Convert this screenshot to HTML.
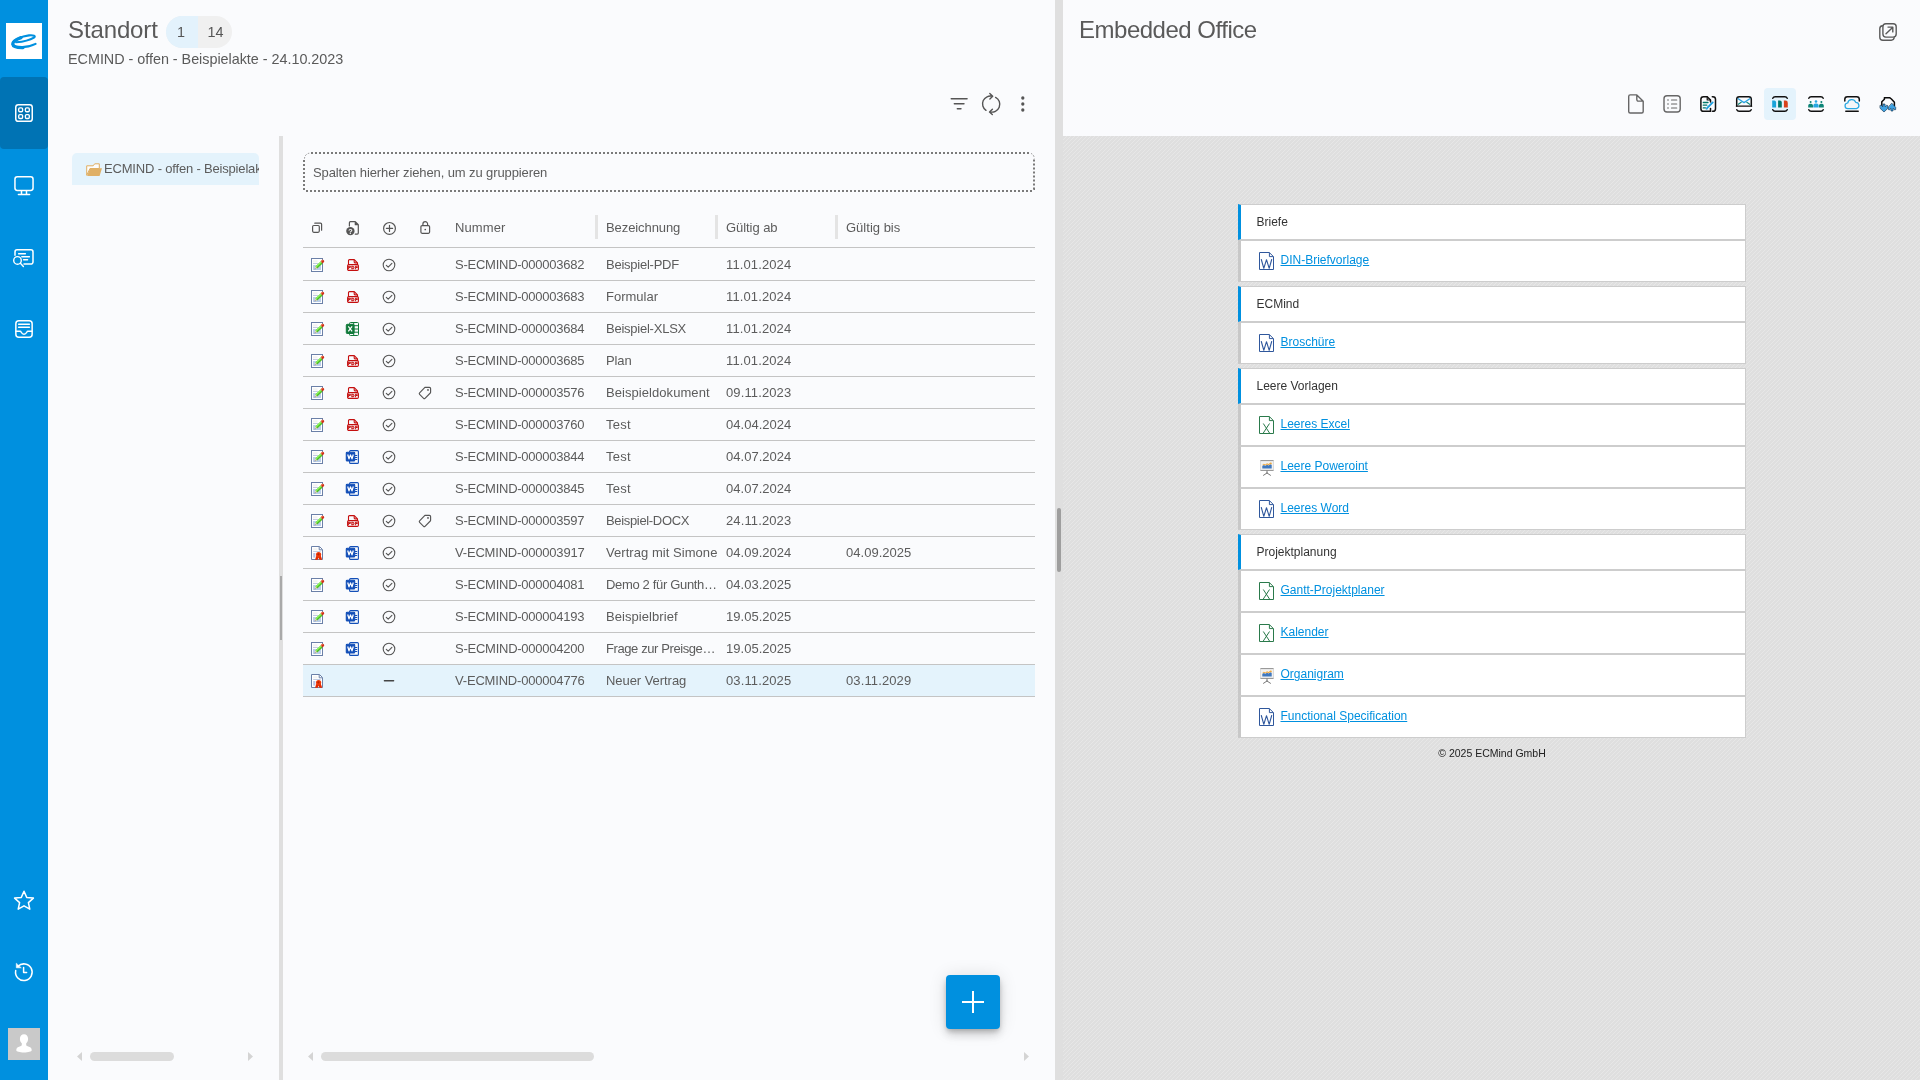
<!DOCTYPE html>
<html lang="de"><head><meta charset="utf-8"><title>Standort</title>
<style>
*{box-sizing:border-box;margin:0;padding:0}
html,body{width:1920px;height:1080px;overflow:hidden;background:#fafbfd}
body{position:relative;font-family:"Liberation Sans",sans-serif;color:#5c5c5c;font-size:13px;-webkit-font-smoothing:antialiased}
#app{position:absolute;left:0;top:0;width:1920px;height:1080px;overflow:hidden;will-change:transform}
svg{position:absolute;overflow:visible}
#side{position:absolute;left:0;top:0;width:48px;height:1080px;background:#0090df}
#side .act{position:absolute;left:0;top:77px;width:48px;height:72px;background:#0073b4;border-radius:4px}
#logo{position:absolute;left:6px;top:23px;width:36px;height:36px;background:#fff}
#avatar{position:absolute;left:8px;top:1028px;width:32px;height:32px;background:#c9c9c9}
.t{position:absolute;white-space:nowrap;line-height:1}
#title{left:68px;top:18px;font-size:24px;letter-spacing:-.12px;color:#5a5a5a}
#rtitle{left:1079px;top:18px;font-size:24px;letter-spacing:-.49px;color:#5a5a5a}
#sub{left:68px;top:52px;font-size:14.4px;letter-spacing:-.03px;color:#5a5a5a}
#pill{position:absolute;left:166px;top:16px;width:66px;height:32px;border-radius:16px;background:#f0f0f0;overflow:hidden}
#pill i{position:absolute;left:0;top:0;width:32px;height:32px;background:#e3f2fc}
.pn{font-size:14.4px;top:25px;color:#555}
#tree{position:absolute;left:72px;top:153px;width:187px;height:32px;background:#e4f3fc;border-radius:5px 5px 0 0;overflow:hidden}
#tree span{position:absolute;left:32px;top:9px;font-size:13px;white-space:nowrap;line-height:1;letter-spacing:-.18px}
#vdiv{position:absolute;left:279px;top:136px;width:4px;height:944px;background:#dfdfdf}
#vdiv i{position:absolute;left:1px;top:440px;width:2px;height:64px;background:#a9a9a9}
#split{position:absolute;left:1055px;top:0;width:8px;height:1080px;background:#dfdfdf}
#split i{position:absolute;left:2px;top:508px;width:4px;height:64px;border-radius:2px;background:#9e9e9e}
#grp{position:absolute;left:303px;top:152px;width:732px;height:40px;padding:2px}
#grp span{position:absolute;left:10px;top:14px;line-height:1;white-space:nowrap;letter-spacing:-.109px}
.hl{position:absolute;left:303px;width:732px;height:1px;background:#c4c4c4}
.sep{position:absolute;top:215px;width:3px;height:24px;background:#e4e4e4}
.sel{position:absolute;left:303px;top:664px;width:732px;height:32px;background:#e4f3fc}
.c{position:absolute;white-space:nowrap;line-height:1;font-size:13px}
.sb{position:absolute;height:9px;border-radius:5px;background:#dcdcdc;top:1052px}
#fab{position:absolute;left:946px;top:975px;width:54px;height:54px;border-radius:4px;background:#0090df;box-shadow:0 3px 5px -1px rgba(0,0,0,.2),0 6px 10px 0 rgba(0,0,0,.14),0 1px 18px 0 rgba(0,0,0,.12)}
#fab:before{content:"";position:absolute;left:16px;top:26.200px;width:22px;height:1.600px;background:#fff}
#fab:after{content:"";position:absolute;left:26.200px;top:16px;width:1.600px;height:22px;background:#fff}
#rbg{position:absolute;left:1063px;top:136px;width:857px;height:944px;background:#dfdfdf;overflow:hidden}
#ract{position:absolute;left:1764px;top:88px;width:32px;height:32px;border-radius:4px;background:#e4f3fc}
.gh,.gi{position:absolute;left:1238px;width:508px;background:#fff;border:1px solid #cdcdcd;border-left:3px solid #c8c8c8;font-size:12px}
.gh{height:36px;border-left-color:#0090df;color:#333}
.gi{height:42px}
.gh span{position:absolute;left:15.5px;top:11px;line-height:1;white-space:nowrap}
.gi a{position:absolute;left:39.500px;top:13px;line-height:1;white-space:nowrap;color:#0090df;text-decoration:underline;text-underline-offset:1px}
#foot{position:absolute;left:1238px;top:748px;width:508px;text-align:center;font-size:10.5px;color:#222;line-height:1;white-space:nowrap}
</style></head>
<body>
<div id="app">
<div id="side"><div class="act"></div><div id="logo"></div><div id="avatar"></div></div>
<svg width="48" height="1080" style="left:0;top:0" viewBox="0 0 48 1080" fill="none" stroke="#fff" stroke-width="1.5" stroke-linecap="round" stroke-linejoin="round">
<path d="M16.2 42.3C22 41.8 30 40 34 37.6C36.2 36.2 33.5 34.9 29 35.4C22 36.2 12.2 40.2 12.6 44.2C13 48.2 26 48.6 35.6 43.9" stroke="#0090df" stroke-width="2.1"/><path d="M21 37.600C15.500 39.700 12.500 42.200 12.800 44.300C13.100 46.600 17.500 47.700 23 47.600" stroke="#0090df" stroke-width="3.300"/>
<rect x="15.75" y="104.75" width="16.5" height="16.5" rx="2.6"/>
<g stroke-width="1.35"><rect x="18.7" y="107.8" width="3.9" height="3.9" rx="1.2"/><rect x="25.4" y="107.8" width="3.9" height="3.9" rx="1.2"/><rect x="18.7" y="114.6" width="3.9" height="3.9" rx="1.2"/><rect x="25.4" y="114.6" width="3.9" height="3.9" rx="1.2"/></g>
<rect x="14.95" y="176.75" width="18.1" height="13.7" rx="2.4"/><path d="M21.5 190.8V194M26.5 190.8V194M18.4 194.6H29.6"/>
<path d="M15 255.3V251.9a2.1 2.1 0 0 1 2.1-2.1H30.9a2.1 2.1 0 0 1 2.1 2.1V262a2.1 2.1 0 0 1-2.1 2.1H24"/><path d="M18.6 253.8H25.4M21.8 256.8H29.4M23.6 259.8H27.6" stroke-width="1.4"/><circle cx="17.5" cy="260.4" r="3.8" stroke-width="1.4"/><path d="M20.4 263.3L23.4 266.4" stroke-width="1.4"/>
<rect x="15.85" y="320.65" width="16.3" height="16.7" rx="3"/><path d="M18.6 324.3H29.4M18.6 327.3H29.4" stroke-width="1.4"/><path d="M16 331.2H20.2C21.4 331.2 21.2 334.3 24 334.3C26.8 334.3 26.6 331.2 27.8 331.2H32"/>
<path d="M24 891.2L26.7 897.4L33.4 898.1L28.4 902.6L29.8 909.2L24 905.8L18.2 909.2L19.6 902.6L14.6 898.1L21.3 897.4Z"/>
<path d="M17.9 966.4A8.3 8.3 0 1 1 15.7 970.6"/><path d="M16.3 963.6V967.8H20.9Z" fill="#fff" stroke-width=".6"/><path d="M23.6 967.6V972.4H26.6"/>
<path d="M24 1034.300c2.400 0 4.100 1.900 4.100 4.600c0 1.800-.8 3.400-1.900 4.300v1.500c0 1 1.100 1.400 2.700 2c2 .7 2.800 1.500 2.800 3.500c0 1.400-3.400 2.200-7.700 2.200s-7.700-.8-7.700-2.200c0-2 .8-2.800 2.800-3.500c1.600-.6 2.700-1 2.700-2v-1.500c-1.100-.9-1.900-2.500-1.900-4.300c0-2.700 1.700-4.600 4.100-4.600z" fill="#fff" stroke="none"/>
</svg>
<div class="t" id="title">Standort</div>
<div id="pill"><i></i></div><div class="t pn" style="left:177px">1</div><div class="t pn" style="left:207.5px">14</div>
<div class="t" id="sub">ECMIND - offen - Beispielakte - 24.10.2023</div>
<svg width="100" height="36" style="left:940px;top:86px" viewBox="940 86 100 36" fill="none" stroke="#555" stroke-width="1.4" stroke-linecap="round" stroke-linejoin="round">
<path d="M951.2 98.7H967.1M954.3 103.7H964M957.3 108.7H961"/>
<path d="M986 110.3A7.8 7.8 0 0 1 992.4 96.3M989.8 93.6L992.7 96.3L989.9 98.9"/><path d="M995.6 97.4A7.8 7.8 0 0 1 989.8 111.8M992.4 109.2L989.5 111.9L992.3 114.6"/>
<g fill="#555" stroke="none"><circle cx="1022.8" cy="98" r="1.65"/><circle cx="1022.8" cy="104" r="1.65"/><circle cx="1022.8" cy="110" r="1.65"/></g>
</svg>
<div id="tree"><span>ECMIND - offen - Beispielakte - 24.10.2023</span></div>
<svg width="18" height="16" style="left:85px;top:161px" viewBox="85 161 18 16"><path d="M86.700 175.300V165.800H93.200L94.700 163.800H99.300V168.500H90z" fill="#fdfdfd" stroke="#e0ae62" stroke-width="1" stroke-linejoin="round"/><path d="M90 168.200H102L99.600 175.900H87.100z" fill="#e0b066"/></svg>
<div id="vdiv"><i></i></div>
<div class="sb" style="left:90px;width:84px"></div><div class="sb" style="left:321px;width:273px"></div>
<svg width="1000" height="12" style="left:70px;top:1050px" viewBox="70 1050 1000 12" fill="#d4d4d4"><path d="M82 1052v9l-5-4.500zM248 1052v9l5-4.500zM313 1052v9l-5-4.500zM1024 1052v9l5-4.500z"/></svg>
<div id="grp"><span>Spalten hierher ziehen, um zu gruppieren</span></div>
<svg width="740" height="48" style="left:300px;top:148px" viewBox="300 148 740 48" fill="none" stroke="#7a7a7a" stroke-width="2" shape-rendering="crispEdges"><path d="M311 153H1030" stroke-dasharray="2 2"/><path d="M306 191H1033" stroke-dasharray="2 2"/><path d="M304 160V191" stroke-dasharray="2 2"/><path d="M1034 159.500V190" stroke-dasharray="2 2" shape-rendering="auto"/><g shape-rendering="auto" stroke-width="1" stroke="#8a8a8a" stroke-dasharray="1.500 1.500"><path d="M304.500 158.500A5.500 5.500 0 0 1 309.500 153.200"/><path d="M1031 153.400A5.500 5.500 0 0 1 1034.300 158.500"/></g><path d="M1033 188h2v2h-1.200z" fill="#777" stroke="none" shape-rendering="auto"/></svg>
<div class="c" style="left:455px;top:221px;letter-spacing:0.117px">Nummer</div><div class="c" style="left:606px;top:221px;letter-spacing:-0.089px">Bezeichnung</div><div class="c" style="left:726px;top:221px;letter-spacing:-0.061px">Gültig ab</div><div class="c" style="left:846px;top:221px;letter-spacing:0.009px">Gültig bis</div>
<div class="sep" style="left:595px"></div><div class="sep" style="left:715px"></div><div class="sep" style="left:835px"></div>
<div class="sel"></div>
<div class="hl" style="top:247px"></div><div class="hl" style="top:280px"></div><div class="hl" style="top:312px"></div><div class="hl" style="top:344px"></div><div class="hl" style="top:376px"></div><div class="hl" style="top:408px"></div><div class="hl" style="top:440px"></div><div class="hl" style="top:472px"></div><div class="hl" style="top:504px"></div><div class="hl" style="top:536px"></div><div class="hl" style="top:568px"></div><div class="hl" style="top:600px"></div><div class="hl" style="top:632px"></div><div class="hl" style="top:664px"></div><div class="hl" style="top:696px"></div>
<svg width="140" height="28" style="left:304px;top:214px" viewBox="304 214 140 28" fill="none" stroke="#555" stroke-width="1.2" stroke-linecap="round" stroke-linejoin="round">
<rect x="312.6" y="225.5" width="6.7" height="6.8" rx="1.2"/><path d="M314.8 223.2H320.5a1.100 1.100 0 0 1 1.100 1.100V230.200"/>
<path d="M350.400 221.700H355.300L358.300 224.700V233.100a1 1 0 0 1-1 1H355.200M355.300 221.700V224.700H358.300M350.400 221.700a1 1 0 0 0-1 1V226"/>
<circle cx="350.400" cy="231.100" r="4.200" fill="#555" stroke="none"/>
<text x="350.400" y="233.700" font-family="Liberation Sans,sans-serif" font-weight="bold" font-size="7.200" fill="#fff" stroke="none" text-anchor="middle">?</text>
<circle cx="389.500" cy="228.400" r="5.900"/><path d="M386.400 228.400H392.600M389.500 225.300V231.500"/>
<rect x="420.900" y="225.600" width="8.700" height="7.700" rx="1.200"/><path d="M422.900 225.500V224a2.350 2.350 0 0 1 4.700 0V225.500"/><circle cx="425.250" cy="229.500" r=".85" fill="#555" stroke="none"/>
</svg>
<svg width="140" height="460" style="left:304px;top:248px" viewBox="304 248 140 460">
<g transform="translate(311 258)"><rect x=".5" y=".5" width="11" height="13" fill="#fff" stroke="#6b80a8" stroke-width="1"/><rect x="2" y="2.300" width="4.500" height="2.200" fill="#f3f3f3"/><rect x="2" y="5.200" width="5" height=".7" fill="#a9b7d6"/><rect x="2" y="7" width="8" height="5" fill="#b9cdea"/><path d="M9.600 3.500L11.700 5.400L6.200 10.400L4.300 10.200L4.400 8.400z" fill="#4fc024"/><path d="M9.600 3.500L10.600 4.400L5.200 9.400L4.400 8.400z" fill="#8df45f"/><path d="M4.200 8.200L6.400 10.600L3.700 11.300z" fill="#e9d3bf"/><path d="M4 10.300l.7 .8l-1.100 .3z" fill="#444"/><path d="M9.600 3.500L10.900 2.100a1.100 1.100 0 0 1 1.600 0l.4 .4a1.100 1.100 0 0 1 0 1.600L11.700 5.400z" fill="#cf2f18"/><path d="M9.900 3.100L10.900 2.100a1.100 1.100 0 0 1 1.100-.3L10.700 3.900z" fill="#f58a5c"/></g><g transform="translate(347 259)" fill="none" stroke="#c40f0f" stroke-width="1.100" stroke-linejoin="round"><path d="M1.500 5.500V1.600a1 1 0 0 1 1-1H7.300L10.500 3.800V5.500z"/><path d="M7.200 .9V3.100a.8 .8 0 0 0 .8 .8H10.200"/><rect x=".6" y="5.600" width="10.800" height="5.800" rx="1.200"/><text x="6" y="10.100" font-family="Liberation Sans,sans-serif" font-weight="bold" font-size="4.400" fill="#c40f0f" stroke="#c40f0f" stroke-width=".350" text-anchor="middle" letter-spacing=".350">PDF</text></g><circle cx="389" cy="265.0" r="5.800" fill="none" stroke="#555" stroke-width="1.100"/><path d="M386.300 265.3l1.900 1.900l3.700-3.900" fill="none" stroke="#555" stroke-width="1.100" stroke-linecap="round" stroke-linejoin="round"/>
<g transform="translate(311 290)"><rect x=".5" y=".5" width="11" height="13" fill="#fff" stroke="#6b80a8" stroke-width="1"/><rect x="2" y="2.300" width="4.500" height="2.200" fill="#f3f3f3"/><rect x="2" y="5.200" width="5" height=".7" fill="#a9b7d6"/><rect x="2" y="7" width="8" height="5" fill="#b9cdea"/><path d="M9.600 3.500L11.700 5.400L6.200 10.400L4.300 10.200L4.400 8.400z" fill="#4fc024"/><path d="M9.600 3.500L10.600 4.400L5.200 9.400L4.400 8.400z" fill="#8df45f"/><path d="M4.200 8.200L6.400 10.600L3.700 11.300z" fill="#e9d3bf"/><path d="M4 10.300l.7 .8l-1.100 .3z" fill="#444"/><path d="M9.600 3.500L10.900 2.100a1.100 1.100 0 0 1 1.600 0l.4 .4a1.100 1.100 0 0 1 0 1.600L11.700 5.400z" fill="#cf2f18"/><path d="M9.900 3.100L10.900 2.100a1.100 1.100 0 0 1 1.100-.3L10.700 3.900z" fill="#f58a5c"/></g><g transform="translate(347 291)" fill="none" stroke="#c40f0f" stroke-width="1.100" stroke-linejoin="round"><path d="M1.500 5.500V1.600a1 1 0 0 1 1-1H7.300L10.500 3.800V5.500z"/><path d="M7.200 .9V3.100a.8 .8 0 0 0 .8 .8H10.200"/><rect x=".6" y="5.600" width="10.800" height="5.800" rx="1.200"/><text x="6" y="10.100" font-family="Liberation Sans,sans-serif" font-weight="bold" font-size="4.400" fill="#c40f0f" stroke="#c40f0f" stroke-width=".350" text-anchor="middle" letter-spacing=".350">PDF</text></g><circle cx="389" cy="297.0" r="5.800" fill="none" stroke="#555" stroke-width="1.100"/><path d="M386.300 297.3l1.900 1.900l3.700-3.900" fill="none" stroke="#555" stroke-width="1.100" stroke-linecap="round" stroke-linejoin="round"/>
<g transform="translate(311 322)"><rect x=".5" y=".5" width="11" height="13" fill="#fff" stroke="#6b80a8" stroke-width="1"/><rect x="2" y="2.300" width="4.500" height="2.200" fill="#f3f3f3"/><rect x="2" y="5.200" width="5" height=".7" fill="#a9b7d6"/><rect x="2" y="7" width="8" height="5" fill="#b9cdea"/><path d="M9.600 3.500L11.700 5.400L6.200 10.400L4.300 10.200L4.400 8.400z" fill="#4fc024"/><path d="M9.600 3.500L10.600 4.400L5.200 9.400L4.400 8.400z" fill="#8df45f"/><path d="M4.200 8.200L6.400 10.600L3.700 11.300z" fill="#e9d3bf"/><path d="M4 10.300l.7 .8l-1.100 .3z" fill="#444"/><path d="M9.600 3.500L10.900 2.100a1.100 1.100 0 0 1 1.600 0l.4 .4a1.100 1.100 0 0 1 0 1.600L11.700 5.400z" fill="#cf2f18"/><path d="M9.900 3.100L10.900 2.100a1.100 1.100 0 0 1 1.100-.3L10.700 3.900z" fill="#f58a5c"/></g><g transform="translate(346 322)" fill="none" stroke="#117a3b" stroke-width="1" stroke-linejoin="round"><path d="M3.500 2.300V1.500a1 1 0 0 1 1-1H11.500a1 1 0 0 1 1 1V12.500a1 1 0 0 1-1 1H4.500a1 1 0 0 1-1-1V11.500"/><path d="M7.700 .6V13.400M7.700 3.700H12.500M7.700 7H12.500M7.700 10.200H12.500"/><rect x=".3" y="2.300" width="7.800" height="9.200" rx=".8" fill="#117a3b"/><path d="M2.300 4.400L6.100 9.400M6.100 4.400L2.300 9.400" stroke="#fff" stroke-width="1.200"/></g><circle cx="389" cy="329.0" r="5.800" fill="none" stroke="#555" stroke-width="1.100"/><path d="M386.300 329.3l1.900 1.900l3.700-3.900" fill="none" stroke="#555" stroke-width="1.100" stroke-linecap="round" stroke-linejoin="round"/>
<g transform="translate(311 354)"><rect x=".5" y=".5" width="11" height="13" fill="#fff" stroke="#6b80a8" stroke-width="1"/><rect x="2" y="2.300" width="4.500" height="2.200" fill="#f3f3f3"/><rect x="2" y="5.200" width="5" height=".7" fill="#a9b7d6"/><rect x="2" y="7" width="8" height="5" fill="#b9cdea"/><path d="M9.600 3.500L11.700 5.400L6.200 10.400L4.300 10.200L4.400 8.400z" fill="#4fc024"/><path d="M9.600 3.500L10.600 4.400L5.200 9.400L4.400 8.400z" fill="#8df45f"/><path d="M4.200 8.200L6.400 10.600L3.700 11.300z" fill="#e9d3bf"/><path d="M4 10.300l.7 .8l-1.100 .3z" fill="#444"/><path d="M9.600 3.500L10.900 2.100a1.100 1.100 0 0 1 1.600 0l.4 .4a1.100 1.100 0 0 1 0 1.600L11.700 5.400z" fill="#cf2f18"/><path d="M9.900 3.100L10.900 2.100a1.100 1.100 0 0 1 1.100-.3L10.700 3.900z" fill="#f58a5c"/></g><g transform="translate(347 355)" fill="none" stroke="#c40f0f" stroke-width="1.100" stroke-linejoin="round"><path d="M1.500 5.500V1.600a1 1 0 0 1 1-1H7.300L10.500 3.800V5.500z"/><path d="M7.200 .9V3.100a.8 .8 0 0 0 .8 .8H10.200"/><rect x=".6" y="5.600" width="10.800" height="5.800" rx="1.200"/><text x="6" y="10.100" font-family="Liberation Sans,sans-serif" font-weight="bold" font-size="4.400" fill="#c40f0f" stroke="#c40f0f" stroke-width=".350" text-anchor="middle" letter-spacing=".350">PDF</text></g><circle cx="389" cy="361.0" r="5.800" fill="none" stroke="#555" stroke-width="1.100"/><path d="M386.300 361.3l1.900 1.900l3.700-3.900" fill="none" stroke="#555" stroke-width="1.100" stroke-linecap="round" stroke-linejoin="round"/>
<g transform="translate(311 386)"><rect x=".5" y=".5" width="11" height="13" fill="#fff" stroke="#6b80a8" stroke-width="1"/><rect x="2" y="2.300" width="4.500" height="2.200" fill="#f3f3f3"/><rect x="2" y="5.200" width="5" height=".7" fill="#a9b7d6"/><rect x="2" y="7" width="8" height="5" fill="#b9cdea"/><path d="M9.600 3.500L11.700 5.400L6.200 10.400L4.300 10.200L4.400 8.400z" fill="#4fc024"/><path d="M9.600 3.500L10.600 4.400L5.200 9.400L4.400 8.400z" fill="#8df45f"/><path d="M4.200 8.200L6.400 10.600L3.700 11.300z" fill="#e9d3bf"/><path d="M4 10.300l.7 .8l-1.100 .3z" fill="#444"/><path d="M9.600 3.500L10.900 2.100a1.100 1.100 0 0 1 1.600 0l.4 .4a1.100 1.100 0 0 1 0 1.600L11.700 5.400z" fill="#cf2f18"/><path d="M9.900 3.100L10.900 2.100a1.100 1.100 0 0 1 1.100-.3L10.700 3.900z" fill="#f58a5c"/></g><g transform="translate(347 387)" fill="none" stroke="#c40f0f" stroke-width="1.100" stroke-linejoin="round"><path d="M1.500 5.500V1.600a1 1 0 0 1 1-1H7.300L10.500 3.800V5.500z"/><path d="M7.200 .9V3.100a.8 .8 0 0 0 .8 .8H10.200"/><rect x=".6" y="5.600" width="10.800" height="5.800" rx="1.200"/><text x="6" y="10.100" font-family="Liberation Sans,sans-serif" font-weight="bold" font-size="4.400" fill="#c40f0f" stroke="#c40f0f" stroke-width=".350" text-anchor="middle" letter-spacing=".350">PDF</text></g><circle cx="389" cy="393.0" r="5.800" fill="none" stroke="#555" stroke-width="1.100"/><path d="M386.300 393.3l1.900 1.900l3.700-3.900" fill="none" stroke="#555" stroke-width="1.100" stroke-linecap="round" stroke-linejoin="round"/><g transform="translate(0 0)" fill="none" stroke="#555" stroke-width="1.150" stroke-linejoin="round"><path d="M424.900 387.300H429.400a1.200 1.200 0 0 1 1.200 1.200V392.300a1 1 0 0 1-.3 .7L425 398.300a1 1 0 0 1-1.400 0L419.600 394.300a1 1 0 0 1 0-1.400z"/><circle cx="428" cy="389.900" r=".9" fill="#555" stroke="none"/></g>
<g transform="translate(311 418)"><rect x=".5" y=".5" width="11" height="13" fill="#fff" stroke="#6b80a8" stroke-width="1"/><rect x="2" y="2.300" width="4.500" height="2.200" fill="#f3f3f3"/><rect x="2" y="5.200" width="5" height=".7" fill="#a9b7d6"/><rect x="2" y="7" width="8" height="5" fill="#b9cdea"/><path d="M9.600 3.500L11.700 5.400L6.200 10.400L4.300 10.200L4.400 8.400z" fill="#4fc024"/><path d="M9.600 3.500L10.600 4.400L5.200 9.400L4.400 8.400z" fill="#8df45f"/><path d="M4.200 8.200L6.400 10.600L3.700 11.300z" fill="#e9d3bf"/><path d="M4 10.300l.7 .8l-1.100 .3z" fill="#444"/><path d="M9.600 3.500L10.900 2.100a1.100 1.100 0 0 1 1.600 0l.4 .4a1.100 1.100 0 0 1 0 1.600L11.700 5.400z" fill="#cf2f18"/><path d="M9.900 3.100L10.900 2.100a1.100 1.100 0 0 1 1.100-.3L10.700 3.900z" fill="#f58a5c"/></g><g transform="translate(347 419)" fill="none" stroke="#c40f0f" stroke-width="1.100" stroke-linejoin="round"><path d="M1.500 5.500V1.600a1 1 0 0 1 1-1H7.300L10.500 3.800V5.500z"/><path d="M7.200 .9V3.100a.8 .8 0 0 0 .8 .8H10.200"/><rect x=".6" y="5.600" width="10.800" height="5.800" rx="1.200"/><text x="6" y="10.100" font-family="Liberation Sans,sans-serif" font-weight="bold" font-size="4.400" fill="#c40f0f" stroke="#c40f0f" stroke-width=".350" text-anchor="middle" letter-spacing=".350">PDF</text></g><circle cx="389" cy="425.0" r="5.800" fill="none" stroke="#555" stroke-width="1.100"/><path d="M386.300 425.3l1.900 1.900l3.700-3.900" fill="none" stroke="#555" stroke-width="1.100" stroke-linecap="round" stroke-linejoin="round"/>
<g transform="translate(311 450)"><rect x=".5" y=".5" width="11" height="13" fill="#fff" stroke="#6b80a8" stroke-width="1"/><rect x="2" y="2.300" width="4.500" height="2.200" fill="#f3f3f3"/><rect x="2" y="5.200" width="5" height=".7" fill="#a9b7d6"/><rect x="2" y="7" width="8" height="5" fill="#b9cdea"/><path d="M9.600 3.500L11.700 5.400L6.200 10.400L4.300 10.200L4.400 8.400z" fill="#4fc024"/><path d="M9.600 3.500L10.600 4.400L5.200 9.400L4.400 8.400z" fill="#8df45f"/><path d="M4.200 8.200L6.400 10.600L3.700 11.300z" fill="#e9d3bf"/><path d="M4 10.300l.7 .8l-1.100 .3z" fill="#444"/><path d="M9.600 3.500L10.900 2.100a1.100 1.100 0 0 1 1.600 0l.4 .4a1.100 1.100 0 0 1 0 1.600L11.700 5.400z" fill="#cf2f18"/><path d="M9.900 3.100L10.900 2.100a1.100 1.100 0 0 1 1.100-.3L10.700 3.900z" fill="#f58a5c"/></g><g transform="translate(346 450)" fill="none" stroke="#134fb8" stroke-width="1.100" stroke-linejoin="round"><path d="M3.600 2.300V1.600a1 1 0 0 1 1-1H11.400a1 1 0 0 1 1 1V12.400a1 1 0 0 1-1 1H4.600a1 1 0 0 1-1-1V11"/><path d="M9.200 5.500H10.800M9.200 7.500H10.800M9.200 9.500H10.800" stroke-linecap="round"/><rect x=".3" y="2.300" width="8.400" height="8.700" rx=".8" fill="#134fb8"/><path d="M1.700 4.500L3 8.800L4.500 4.900L6 8.800L7.300 4.500" stroke="#fff" stroke-width="1.250"/></g><circle cx="389" cy="457.0" r="5.800" fill="none" stroke="#555" stroke-width="1.100"/><path d="M386.300 457.3l1.900 1.900l3.700-3.900" fill="none" stroke="#555" stroke-width="1.100" stroke-linecap="round" stroke-linejoin="round"/>
<g transform="translate(311 482)"><rect x=".5" y=".5" width="11" height="13" fill="#fff" stroke="#6b80a8" stroke-width="1"/><rect x="2" y="2.300" width="4.500" height="2.200" fill="#f3f3f3"/><rect x="2" y="5.200" width="5" height=".7" fill="#a9b7d6"/><rect x="2" y="7" width="8" height="5" fill="#b9cdea"/><path d="M9.600 3.500L11.700 5.400L6.200 10.400L4.300 10.200L4.400 8.400z" fill="#4fc024"/><path d="M9.600 3.500L10.600 4.400L5.200 9.400L4.400 8.400z" fill="#8df45f"/><path d="M4.200 8.200L6.400 10.600L3.700 11.300z" fill="#e9d3bf"/><path d="M4 10.300l.7 .8l-1.100 .3z" fill="#444"/><path d="M9.600 3.500L10.900 2.100a1.100 1.100 0 0 1 1.600 0l.4 .4a1.100 1.100 0 0 1 0 1.600L11.700 5.400z" fill="#cf2f18"/><path d="M9.900 3.100L10.900 2.100a1.100 1.100 0 0 1 1.100-.3L10.700 3.900z" fill="#f58a5c"/></g><g transform="translate(346 482)" fill="none" stroke="#134fb8" stroke-width="1.100" stroke-linejoin="round"><path d="M3.600 2.300V1.600a1 1 0 0 1 1-1H11.400a1 1 0 0 1 1 1V12.400a1 1 0 0 1-1 1H4.600a1 1 0 0 1-1-1V11"/><path d="M9.200 5.500H10.800M9.200 7.500H10.800M9.200 9.500H10.800" stroke-linecap="round"/><rect x=".3" y="2.300" width="8.400" height="8.700" rx=".8" fill="#134fb8"/><path d="M1.700 4.500L3 8.800L4.500 4.900L6 8.800L7.300 4.500" stroke="#fff" stroke-width="1.250"/></g><circle cx="389" cy="489.0" r="5.800" fill="none" stroke="#555" stroke-width="1.100"/><path d="M386.300 489.3l1.900 1.900l3.700-3.900" fill="none" stroke="#555" stroke-width="1.100" stroke-linecap="round" stroke-linejoin="round"/>
<g transform="translate(311 514)"><rect x=".5" y=".5" width="11" height="13" fill="#fff" stroke="#6b80a8" stroke-width="1"/><rect x="2" y="2.300" width="4.500" height="2.200" fill="#f3f3f3"/><rect x="2" y="5.200" width="5" height=".7" fill="#a9b7d6"/><rect x="2" y="7" width="8" height="5" fill="#b9cdea"/><path d="M9.600 3.500L11.700 5.400L6.200 10.400L4.300 10.200L4.400 8.400z" fill="#4fc024"/><path d="M9.600 3.500L10.600 4.400L5.200 9.400L4.400 8.400z" fill="#8df45f"/><path d="M4.200 8.200L6.400 10.600L3.700 11.300z" fill="#e9d3bf"/><path d="M4 10.300l.7 .8l-1.100 .3z" fill="#444"/><path d="M9.600 3.500L10.900 2.100a1.100 1.100 0 0 1 1.600 0l.4 .4a1.100 1.100 0 0 1 0 1.600L11.700 5.400z" fill="#cf2f18"/><path d="M9.900 3.100L10.900 2.100a1.100 1.100 0 0 1 1.100-.3L10.700 3.900z" fill="#f58a5c"/></g><g transform="translate(347 515)" fill="none" stroke="#c40f0f" stroke-width="1.100" stroke-linejoin="round"><path d="M1.500 5.500V1.600a1 1 0 0 1 1-1H7.300L10.500 3.800V5.500z"/><path d="M7.200 .9V3.100a.8 .8 0 0 0 .8 .8H10.200"/><rect x=".6" y="5.600" width="10.800" height="5.800" rx="1.200"/><text x="6" y="10.100" font-family="Liberation Sans,sans-serif" font-weight="bold" font-size="4.400" fill="#c40f0f" stroke="#c40f0f" stroke-width=".350" text-anchor="middle" letter-spacing=".350">PDF</text></g><circle cx="389" cy="521.0" r="5.800" fill="none" stroke="#555" stroke-width="1.100"/><path d="M386.300 521.3l1.900 1.900l3.700-3.900" fill="none" stroke="#555" stroke-width="1.100" stroke-linecap="round" stroke-linejoin="round"/><g transform="translate(0 128)" fill="none" stroke="#555" stroke-width="1.150" stroke-linejoin="round"><path d="M424.900 387.300H429.400a1.200 1.200 0 0 1 1.200 1.200V392.300a1 1 0 0 1-.3 .7L425 398.300a1 1 0 0 1-1.400 0L419.600 394.300a1 1 0 0 1 0-1.400z"/><circle cx="428" cy="389.900" r=".9" fill="#555" stroke="none"/></g>
<g transform="translate(311 546)"><path d="M.5 .5H8.500L11.500 3.500V13.500H.5z" fill="#fff" stroke="#6b80a8" stroke-width="1" stroke-linejoin="round"/><path d="M8.200 .8V3.800H11.200" fill="none" stroke="#6b80a8" stroke-width="1"/><rect x="2.200" y="2.300" width="4.200" height="2" fill="#f3f3f3"/><rect x="2.200" y="5.200" width="7.500" height=".7" fill="#a9b7d6"/><rect x="2.200" y="7" width="2.200" height="4.600" fill="#b8c3e6"/><path d="M5.300 10L4 13.700H6.800L7.600 11.500L8.400 13.700H11.200L9.900 10z" fill="#e32a00"/><circle cx="7.600" cy="8.600" r="2.600" fill="#f03a0a"/><circle cx="7.400" cy="8.300" r="1.100" fill="#b92400"/></g><g transform="translate(346 546)" fill="none" stroke="#134fb8" stroke-width="1.100" stroke-linejoin="round"><path d="M3.600 2.300V1.600a1 1 0 0 1 1-1H11.400a1 1 0 0 1 1 1V12.400a1 1 0 0 1-1 1H4.600a1 1 0 0 1-1-1V11"/><path d="M9.200 5.500H10.800M9.200 7.500H10.800M9.200 9.500H10.800" stroke-linecap="round"/><rect x=".3" y="2.300" width="8.400" height="8.700" rx=".8" fill="#134fb8"/><path d="M1.700 4.500L3 8.800L4.500 4.900L6 8.800L7.300 4.500" stroke="#fff" stroke-width="1.250"/></g><circle cx="389" cy="553.0" r="5.800" fill="none" stroke="#555" stroke-width="1.100"/><path d="M386.300 553.3l1.900 1.900l3.700-3.900" fill="none" stroke="#555" stroke-width="1.100" stroke-linecap="round" stroke-linejoin="round"/>
<g transform="translate(311 578)"><rect x=".5" y=".5" width="11" height="13" fill="#fff" stroke="#6b80a8" stroke-width="1"/><rect x="2" y="2.300" width="4.500" height="2.200" fill="#f3f3f3"/><rect x="2" y="5.200" width="5" height=".7" fill="#a9b7d6"/><rect x="2" y="7" width="8" height="5" fill="#b9cdea"/><path d="M9.600 3.500L11.700 5.400L6.200 10.400L4.300 10.200L4.400 8.400z" fill="#4fc024"/><path d="M9.600 3.500L10.600 4.400L5.200 9.400L4.400 8.400z" fill="#8df45f"/><path d="M4.200 8.200L6.400 10.600L3.700 11.300z" fill="#e9d3bf"/><path d="M4 10.300l.7 .8l-1.100 .3z" fill="#444"/><path d="M9.600 3.500L10.900 2.100a1.100 1.100 0 0 1 1.600 0l.4 .4a1.100 1.100 0 0 1 0 1.600L11.700 5.400z" fill="#cf2f18"/><path d="M9.900 3.100L10.900 2.100a1.100 1.100 0 0 1 1.100-.3L10.700 3.900z" fill="#f58a5c"/></g><g transform="translate(346 578)" fill="none" stroke="#134fb8" stroke-width="1.100" stroke-linejoin="round"><path d="M3.600 2.300V1.600a1 1 0 0 1 1-1H11.400a1 1 0 0 1 1 1V12.400a1 1 0 0 1-1 1H4.600a1 1 0 0 1-1-1V11"/><path d="M9.200 5.500H10.800M9.200 7.500H10.800M9.200 9.500H10.800" stroke-linecap="round"/><rect x=".3" y="2.300" width="8.400" height="8.700" rx=".8" fill="#134fb8"/><path d="M1.700 4.500L3 8.800L4.500 4.900L6 8.800L7.300 4.500" stroke="#fff" stroke-width="1.250"/></g><circle cx="389" cy="585.0" r="5.800" fill="none" stroke="#555" stroke-width="1.100"/><path d="M386.300 585.3l1.900 1.900l3.700-3.900" fill="none" stroke="#555" stroke-width="1.100" stroke-linecap="round" stroke-linejoin="round"/>
<g transform="translate(311 610)"><rect x=".5" y=".5" width="11" height="13" fill="#fff" stroke="#6b80a8" stroke-width="1"/><rect x="2" y="2.300" width="4.500" height="2.200" fill="#f3f3f3"/><rect x="2" y="5.200" width="5" height=".7" fill="#a9b7d6"/><rect x="2" y="7" width="8" height="5" fill="#b9cdea"/><path d="M9.600 3.500L11.700 5.400L6.200 10.400L4.300 10.200L4.400 8.400z" fill="#4fc024"/><path d="M9.600 3.500L10.600 4.400L5.200 9.400L4.400 8.400z" fill="#8df45f"/><path d="M4.200 8.200L6.400 10.600L3.700 11.300z" fill="#e9d3bf"/><path d="M4 10.300l.7 .8l-1.100 .3z" fill="#444"/><path d="M9.600 3.500L10.900 2.100a1.100 1.100 0 0 1 1.600 0l.4 .4a1.100 1.100 0 0 1 0 1.600L11.700 5.400z" fill="#cf2f18"/><path d="M9.900 3.100L10.900 2.100a1.100 1.100 0 0 1 1.100-.3L10.700 3.900z" fill="#f58a5c"/></g><g transform="translate(346 610)" fill="none" stroke="#134fb8" stroke-width="1.100" stroke-linejoin="round"><path d="M3.600 2.300V1.600a1 1 0 0 1 1-1H11.400a1 1 0 0 1 1 1V12.400a1 1 0 0 1-1 1H4.600a1 1 0 0 1-1-1V11"/><path d="M9.200 5.500H10.800M9.200 7.500H10.800M9.200 9.500H10.800" stroke-linecap="round"/><rect x=".3" y="2.300" width="8.400" height="8.700" rx=".8" fill="#134fb8"/><path d="M1.700 4.500L3 8.800L4.500 4.900L6 8.800L7.300 4.500" stroke="#fff" stroke-width="1.250"/></g><circle cx="389" cy="617.0" r="5.800" fill="none" stroke="#555" stroke-width="1.100"/><path d="M386.300 617.3l1.900 1.900l3.700-3.900" fill="none" stroke="#555" stroke-width="1.100" stroke-linecap="round" stroke-linejoin="round"/>
<g transform="translate(311 642)"><rect x=".5" y=".5" width="11" height="13" fill="#fff" stroke="#6b80a8" stroke-width="1"/><rect x="2" y="2.300" width="4.500" height="2.200" fill="#f3f3f3"/><rect x="2" y="5.200" width="5" height=".7" fill="#a9b7d6"/><rect x="2" y="7" width="8" height="5" fill="#b9cdea"/><path d="M9.600 3.500L11.700 5.400L6.200 10.400L4.300 10.200L4.400 8.400z" fill="#4fc024"/><path d="M9.600 3.500L10.600 4.400L5.200 9.400L4.400 8.400z" fill="#8df45f"/><path d="M4.200 8.200L6.400 10.600L3.700 11.300z" fill="#e9d3bf"/><path d="M4 10.300l.7 .8l-1.100 .3z" fill="#444"/><path d="M9.600 3.500L10.900 2.100a1.100 1.100 0 0 1 1.600 0l.4 .4a1.100 1.100 0 0 1 0 1.600L11.700 5.400z" fill="#cf2f18"/><path d="M9.900 3.100L10.900 2.100a1.100 1.100 0 0 1 1.100-.3L10.700 3.900z" fill="#f58a5c"/></g><g transform="translate(346 642)" fill="none" stroke="#134fb8" stroke-width="1.100" stroke-linejoin="round"><path d="M3.600 2.300V1.600a1 1 0 0 1 1-1H11.400a1 1 0 0 1 1 1V12.400a1 1 0 0 1-1 1H4.600a1 1 0 0 1-1-1V11"/><path d="M9.200 5.500H10.800M9.200 7.500H10.800M9.200 9.500H10.800" stroke-linecap="round"/><rect x=".3" y="2.300" width="8.400" height="8.700" rx=".8" fill="#134fb8"/><path d="M1.700 4.500L3 8.800L4.500 4.900L6 8.800L7.300 4.500" stroke="#fff" stroke-width="1.250"/></g><circle cx="389" cy="649.0" r="5.800" fill="none" stroke="#555" stroke-width="1.100"/><path d="M386.300 649.3l1.900 1.900l3.700-3.900" fill="none" stroke="#555" stroke-width="1.100" stroke-linecap="round" stroke-linejoin="round"/>
<g transform="translate(311 674)"><path d="M.5 .5H8.500L11.500 3.500V13.500H.5z" fill="#fff" stroke="#6b80a8" stroke-width="1" stroke-linejoin="round"/><path d="M8.200 .8V3.800H11.200" fill="none" stroke="#6b80a8" stroke-width="1"/><rect x="2.200" y="2.300" width="4.200" height="2" fill="#f3f3f3"/><rect x="2.200" y="5.200" width="7.500" height=".7" fill="#a9b7d6"/><rect x="2.200" y="7" width="2.200" height="4.600" fill="#b8c3e6"/><path d="M5.300 10L4 13.700H6.800L7.600 11.500L8.400 13.700H11.200L9.900 10z" fill="#e32a00"/><circle cx="7.600" cy="8.600" r="2.600" fill="#f03a0a"/><circle cx="7.400" cy="8.300" r="1.100" fill="#b92400"/></g><path d="M384.400 680.8H393.600" stroke="#444" stroke-width="1.400" stroke-linecap="round"/>
</svg>
<div class="c" style="left:455px;top:258px;letter-spacing:-0.249px">S-ECMIND-000003682</div><div class="c" style="left:606px;top:258px;letter-spacing:-0.247px">Beispiel-PDF</div><div class="c" style="left:726px;top:258px;letter-spacing:0.120px">11.01.2024</div>
<div class="c" style="left:455px;top:290px;letter-spacing:-0.249px">S-ECMIND-000003683</div><div class="c" style="left:606px;top:290px;letter-spacing:0.008px">Formular</div><div class="c" style="left:726px;top:290px;letter-spacing:0.120px">11.01.2024</div>
<div class="c" style="left:455px;top:322px;letter-spacing:-0.249px">S-ECMIND-000003684</div><div class="c" style="left:606px;top:322px;letter-spacing:-0.239px">Beispiel-XLSX</div><div class="c" style="left:726px;top:322px;letter-spacing:0.120px">11.01.2024</div>
<div class="c" style="left:455px;top:354px;letter-spacing:-0.249px">S-ECMIND-000003685</div><div class="c" style="left:606px;top:354px;letter-spacing:-0.102px">Plan</div><div class="c" style="left:726px;top:354px;letter-spacing:0.120px">11.01.2024</div>
<div class="c" style="left:455px;top:386px;letter-spacing:-0.249px">S-ECMIND-000003576</div><div class="c" style="left:606px;top:386px;letter-spacing:0.062px">Beispieldokument</div><div class="c" style="left:726px;top:386px;letter-spacing:0.120px">09.11.2023</div>
<div class="c" style="left:455px;top:418px;letter-spacing:-0.249px">S-ECMIND-000003760</div><div class="c" style="left:606px;top:418px;letter-spacing:0.285px">Test</div><div class="c" style="left:726px;top:418px;letter-spacing:0.023px">04.04.2024</div>
<div class="c" style="left:455px;top:450px;letter-spacing:-0.249px">S-ECMIND-000003844</div><div class="c" style="left:606px;top:450px;letter-spacing:0.285px">Test</div><div class="c" style="left:726px;top:450px;letter-spacing:0.023px">04.07.2024</div>
<div class="c" style="left:455px;top:482px;letter-spacing:-0.249px">S-ECMIND-000003845</div><div class="c" style="left:606px;top:482px;letter-spacing:0.285px">Test</div><div class="c" style="left:726px;top:482px;letter-spacing:0.023px">04.07.2024</div>
<div class="c" style="left:455px;top:514px;letter-spacing:-0.249px">S-ECMIND-000003597</div><div class="c" style="left:606px;top:514px;letter-spacing:-0.335px">Beispiel-DOCX</div><div class="c" style="left:726px;top:514px;letter-spacing:0.120px">24.11.2023</div>
<div class="c" style="left:455px;top:546px;letter-spacing:-0.191px">V-ECMIND-000003917</div><div class="c" style="left:606px;top:546px;letter-spacing:0.049px">Vertrag mit Simone</div><div class="c" style="left:726px;top:546px;letter-spacing:0.023px">04.09.2024</div><div class="c" style="left:846px;top:546px;letter-spacing:0.023px">04.09.2025</div>
<div class="c" style="left:455px;top:578px;letter-spacing:-0.249px">S-ECMIND-000004081</div><div class="c" style="left:606px;top:578px;letter-spacing:-0.335px">Demo 2 für Gunth…</div><div class="c" style="left:726px;top:578px;letter-spacing:0.023px">04.03.2025</div>
<div class="c" style="left:455px;top:610px;letter-spacing:-0.249px">S-ECMIND-000004193</div><div class="c" style="left:606px;top:610px;letter-spacing:0.065px">Beispielbrief</div><div class="c" style="left:726px;top:610px;letter-spacing:0.023px">19.05.2025</div>
<div class="c" style="left:455px;top:642px;letter-spacing:-0.249px">S-ECMIND-000004200</div><div class="c" style="left:606px;top:642px;letter-spacing:-0.405px">Frage zur Preisge…</div><div class="c" style="left:726px;top:642px;letter-spacing:0.023px">19.05.2025</div>
<div class="c" style="left:455px;top:674px;letter-spacing:-0.191px">V-ECMIND-000004776</div><div class="c" style="left:606px;top:674px;letter-spacing:-0.053px">Neuer Vertrag</div><div class="c" style="left:726px;top:674px;letter-spacing:0.120px">03.11.2025</div><div class="c" style="left:846px;top:674px;letter-spacing:0.120px">03.11.2029</div>
<div id="fab"></div>
<div id="split"><i></i></div>
<div class="t" id="rtitle">Embedded Office</div>
<svg width="40" height="36" style="left:1868px;top:14px" viewBox="1868 14 40 36" fill="none" stroke="#5a5a5a" stroke-width="1.400" stroke-linecap="round" stroke-linejoin="round">
<rect x="1882.900" y="23.800" width="13.300" height="13.300" rx="3"/><path d="M1882.500 25.700a3 3 0 0 0-2.700 3V37.200a3 3 0 0 0 3 3H1891.300a3 3 0 0 0 2.900-2.500"/>
<path d="M1886 33.800L1892.600 27.400M1888 27.100H1892.800V31.900"/></svg>
<div id="ract"></div>
<svg width="300" height="32" style="left:1620px;top:88px" viewBox="1620 88 300 32" fill="none" stroke-linecap="round" stroke-linejoin="round">
<g stroke="#666" stroke-width="1.400">
<path d="M1630.200 94.900H1636.800L1643.200 101.300V111.500a1.500 1.500 0 0 1-1.500 1.500H1630.200a1.500 1.500 0 0 1-1.500-1.500V96.400a1.500 1.500 0 0 1 1.500-1.500zM1636.800 95.100V99.600a1.500 1.500 0 0 0 1.500 1.500H1643"/>
<rect x="1664" y="95.800" width="16.200" height="16.200" rx="3"/><path d="M1671.500 100H1676.700M1671.500 104H1676.700M1671.500 108H1676.700" stroke-width="1.200"/>
<g fill="#666" stroke="none"><circle cx="1668" cy="100" r=".8"/><circle cx="1668" cy="104" r=".8"/><circle cx="1668" cy="108" r=".8"/></g>
</g>
<!-- edit doc -->
<g stroke="#111" stroke-width="1.500">
<path d="M1712.300 96.700h.6a2.600 2.600 0 0 1 2.600 2.600v9.400a2.600 2.600 0 0 1-2.600 2.600h-.4"/>
<path d="M1710.500 111.300H1703.500a2.600 2.600 0 0 1-2.600-2.600V99.300a2.600 2.600 0 0 1 2.600-2.600H1707.200L1710.500 100V102"/><path d="M1707.200 96.900V100H1710.300" stroke-width="1.200"/><path d="M1710.500 108.500V111.300"/>
</g>
<path d="M1703.300 102.500H1708M1703.300 105.200H1706.800M1703.300 107.900H1705.400" stroke="#00776b" stroke-width="1.300"/>
<path d="M1707.300 107.900L1712.700 102.400" stroke="#1c9fe0" stroke-width="1.900"/><path d="M1706.100 109.200l.4-1.400l1 1z" fill="#1c9fe0" stroke="#1c9fe0" stroke-width=".5"/>
<!-- mail -->
<g stroke="#111" stroke-width="1.500">
<path d="M1736.700 106V99.300a2.600 2.600 0 0 1 2.600-2.600H1748.700a2.600 2.600 0 0 1 2.600 2.600V106"/><path d="M1736.400 106.200H1751.600" stroke-width="1.300"/>
<path d="M1736.800 109.800a2.600 2.600 0 0 0 2.500 1.500H1748.700a2.600 2.600 0 0 0 2.500-1.500"/></g>
<path d="M1738.200 98.700L1744 102.600L1749.800 98.700" stroke="#2aa5e4" stroke-width="1.300"/><path d="M1738.300 104.300L1741.200 102.300M1749.700 104.300L1746.800 102.300" stroke="#0d8577" stroke-width="1.100"/>
<!-- books -->
<g stroke="#111" stroke-width="1.500"><path d="M1772.800 98.300a2.600 2.600 0 0 1 2.500-1.600H1784.700a2.600 2.600 0 0 1 2.500 1.600"/><path d="M1772.800 109.700a2.600 2.600 0 0 0 2.500 1.600H1784.700a2.600 2.600 0 0 0 2.500-1.600"/></g>
<path d="M1772.200 100.600H1774.300a1.800 1.800 0 0 1 1.800 1.800V107.400H1772.200z" fill="#1aa3d9"/><path d="M1778.100 100.600H1779.900a1.900 1.900 0 0 1 1.900 1.900V107.400H1778.100z" fill="#00776b"/><path d="M1783.900 100.600H1785.500a2.300 2.300 0 0 1 2.300 2.300V107.400H1783.900z" fill="#d8431c"/>
<!-- people -->
<g stroke="#111" stroke-width="1.500"><path d="M1808.800 98.300a2.600 2.600 0 0 1 2.500-1.600H1820.700a2.600 2.600 0 0 1 2.500 1.600"/><path d="M1808.800 109.700a2.600 2.600 0 0 0 2.500 1.600H1820.700a2.600 2.600 0 0 0 2.500-1.600"/></g>
<g fill="#0d8577"><circle cx="1810.600" cy="102" r="1"/><path d="M1808.200 107.400V105.400a1.800 1.800 0 0 1 1.800-1.600h1.200a1.800 1.800 0 0 1 1.800 1.600V107.400z"/><circle cx="1821.400" cy="102" r="1"/><path d="M1819 107.400V105.400a1.800 1.800 0 0 1 1.800-1.600h1.200a1.800 1.800 0 0 1 1.800 1.600V107.400z"/></g>
<g fill="#25a6e0"><circle cx="1816" cy="101.500" r="1.300"/><path d="M1813.300 107.400V105.500a2.200 2.200 0 0 1 2.200-2.100h1a2.200 2.200 0 0 1 2.200 2.100V107.400z"/></g>
<!-- cloud -->
<g stroke="#111" stroke-width="1.500"><path d="M1844.800 101V99.300a2.600 2.600 0 0 1 2.600-2.600H1856.700a2.600 2.600 0 0 1 2.600 2.600V101"/><path d="M1845.800 111.300H1858.200" stroke-width="1.500"/></g>
<path d="M1848 108.600a2.800 2.800 0 0 1-.3-5.600a4.200 4.200 0 0 1 8-.700a3.200 3.200 0 0 1 .8 6.300z" stroke="#2aa8e2" stroke-width="1.250" fill="#f4f6f8"/>
<!-- cloud sync -->
<path d="M1881.800 106V101.800L1884.400 99.300V97.700H1889.600L1891.400 99L1894.400 102.200V106" stroke="#0a0a0a" stroke-width="1.500" stroke-linejoin="round"/>
<path d="M1880.300 105.400L1881.400 105.200L1882.800 106.900L1883 104H1885L1885.200 106.900L1886.700 105.200L1887.700 105.500V108.500L1884 112L1880.300 108.500z" fill="#3fa2e3" stroke="#0b2a45" stroke-width=".6" stroke-linejoin="round"/>
<path d="M1892 103.400L1895.700 107.300V109.600L1894.600 109.900L1893.200 108.300L1893 111H1891L1890.800 108.300L1889.500 109.900L1888.400 109.600V107.300z" fill="#3fa2e3" stroke="#0b2a45" stroke-width=".6" stroke-linejoin="round"/>
</svg>
<div id="rbg"><svg width="857" height="944" style="left:0;top:0" shape-rendering="crispEdges"><defs><pattern id="st" width="4" height="4" patternUnits="userSpaceOnUse"><rect width="4" height="4" fill="#dfdfdf"/><rect x="3" y="0" width="1" height="1" fill="#e7e7e7"/><rect x="2" y="1" width="1" height="1" fill="#e7e7e7"/><rect x="1" y="2" width="1" height="1" fill="#e7e7e7"/><rect x="0" y="3" width="1" height="1" fill="#e7e7e7"/></pattern></defs><rect width="857" height="944" fill="url(#st)"/></svg></div>
<div class="gh" style="top:204px"><span>Briefe</span></div>
<div class="gi" style="top:240px"><a>DIN-Briefvorlage</a></div><svg width="16" height="19" style="left:1259px;top:252px" viewBox="0 0 16 19" fill="none" stroke="#2f579c" stroke-width="1"><path d="M.5 .5H10.300L14.500 4.700V17.500H.5z" stroke-linejoin="miter"/><path d="M10.400 .8V4.600H14.200" stroke-width="1"/><path d="M2.300 7.500L4.800 16.300L7.500 7.700L10.200 16.300L12.700 7.500" stroke-width="1.100" stroke-linejoin="round" stroke-linecap="round"/></svg>
<div class="gh" style="top:286px"><span>ECMind</span></div>
<div class="gi" style="top:322px"><a>Broschüre</a></div><svg width="16" height="19" style="left:1259px;top:334px" viewBox="0 0 16 19" fill="none" stroke="#2f579c" stroke-width="1"><path d="M.5 .5H10.300L14.500 4.700V17.500H.5z" stroke-linejoin="miter"/><path d="M10.400 .8V4.600H14.200" stroke-width="1"/><path d="M2.300 7.500L4.800 16.300L7.500 7.700L10.200 16.300L12.700 7.500" stroke-width="1.100" stroke-linejoin="round" stroke-linecap="round"/></svg>
<div class="gh" style="top:368px"><span>Leere Vorlagen</span></div>
<div class="gi" style="top:404px"><a>Leeres Excel</a></div><svg width="16" height="19" style="left:1259px;top:416px" viewBox="0 0 16 19" fill="none" stroke="#2a7a4b" stroke-width="1"><path d="M.5 .5H10.300L14.500 4.700V17.500H.5z" stroke-linejoin="miter"/><path d="M10.400 .8V4.600H14.200" stroke-width="1"/><path d="M4.300 7.500L10.500 17M10.500 7.500L4.300 17" stroke-width="1"/></svg>
<div class="gi" style="top:446px"><a>Leere Poweroint</a></div><svg width="14" height="16" style="left:1259.500px;top:460px" viewBox="0 0 14 16"><rect x=".3" y=".3" width="13.400" height="10.400" fill="#f1f1f1"/><rect x=".3" y="0" width="13.400" height="1.100" fill="#9a9a9a"/><rect x=".3" y="9.900" width="13.400" height="1.100" fill="#9a9a9a"/><rect x=".3" y="0" width=".6" height="11" fill="#c9c9c9"/><rect x="13.100" y="0" width=".6" height="11" fill="#c9c9c9"/><path d="M2.300 8.500V5.900l1.500-.8l1.600 .6l1.600-1l1.700 .8l1.600-1.200l1.400 .6V8.500z" fill="#3f78bf"/><path d="M2.300 5l1.500-1.300l1.600 .7l1.600-1.200l1.700 .8l1.600-1.500l1.400 .3v1.800l-1.400-.6l-1.600 1.200l-1.700-.8l-1.600 1l-1.600-.6l-1.500 .8z" fill="#f0a73a"/><path d="M7 11V13.200M7 13L3.500 15.300M7 13L10.500 15.300" stroke="#777" stroke-width="1" fill="none" stroke-linecap="round"/></svg>
<div class="gi" style="top:488px"><a>Leeres Word</a></div><svg width="16" height="19" style="left:1259px;top:500px" viewBox="0 0 16 19" fill="none" stroke="#2f579c" stroke-width="1"><path d="M.5 .5H10.300L14.500 4.700V17.500H.5z" stroke-linejoin="miter"/><path d="M10.400 .8V4.600H14.200" stroke-width="1"/><path d="M2.300 7.500L4.800 16.300L7.500 7.700L10.200 16.300L12.700 7.500" stroke-width="1.100" stroke-linejoin="round" stroke-linecap="round"/></svg>
<div class="gh" style="top:534px"><span>Projektplanung</span></div>
<div class="gi" style="top:570px"><a>Gantt-Projektplaner</a></div><svg width="16" height="19" style="left:1259px;top:582px" viewBox="0 0 16 19" fill="none" stroke="#2a7a4b" stroke-width="1"><path d="M.5 .5H10.300L14.500 4.700V17.500H.5z" stroke-linejoin="miter"/><path d="M10.400 .8V4.600H14.200" stroke-width="1"/><path d="M4.300 7.500L10.500 17M10.500 7.500L4.300 17" stroke-width="1"/></svg>
<div class="gi" style="top:612px"><a>Kalender</a></div><svg width="16" height="19" style="left:1259px;top:624px" viewBox="0 0 16 19" fill="none" stroke="#2a7a4b" stroke-width="1"><path d="M.5 .5H10.300L14.500 4.700V17.500H.5z" stroke-linejoin="miter"/><path d="M10.400 .8V4.600H14.200" stroke-width="1"/><path d="M4.300 7.500L10.500 17M10.500 7.500L4.300 17" stroke-width="1"/></svg>
<div class="gi" style="top:654px"><a>Organigram</a></div><svg width="14" height="16" style="left:1259.500px;top:668px" viewBox="0 0 14 16"><rect x=".3" y=".3" width="13.400" height="10.400" fill="#f1f1f1"/><rect x=".3" y="0" width="13.400" height="1.100" fill="#9a9a9a"/><rect x=".3" y="9.900" width="13.400" height="1.100" fill="#9a9a9a"/><rect x=".3" y="0" width=".6" height="11" fill="#c9c9c9"/><rect x="13.100" y="0" width=".6" height="11" fill="#c9c9c9"/><path d="M2.300 8.500V5.900l1.500-.8l1.600 .6l1.600-1l1.700 .8l1.600-1.200l1.400 .6V8.500z" fill="#3f78bf"/><path d="M2.300 5l1.500-1.300l1.600 .7l1.600-1.200l1.700 .8l1.600-1.500l1.400 .3v1.800l-1.400-.6l-1.600 1.200l-1.700-.8l-1.600 1l-1.600-.6l-1.500 .8z" fill="#f0a73a"/><path d="M7 11V13.200M7 13L3.500 15.300M7 13L10.500 15.300" stroke="#777" stroke-width="1" fill="none" stroke-linecap="round"/></svg>
<div class="gi" style="top:696px"><a>Functional Specification</a></div><svg width="16" height="19" style="left:1259px;top:708px" viewBox="0 0 16 19" fill="none" stroke="#2f579c" stroke-width="1"><path d="M.5 .5H10.300L14.500 4.700V17.500H.5z" stroke-linejoin="miter"/><path d="M10.400 .8V4.600H14.200" stroke-width="1"/><path d="M2.300 7.500L4.800 16.300L7.500 7.700L10.200 16.300L12.700 7.500" stroke-width="1.100" stroke-linejoin="round" stroke-linecap="round"/></svg>
<div id="foot">© 2025 ECMind GmbH</div>
</div>
</body></html>
